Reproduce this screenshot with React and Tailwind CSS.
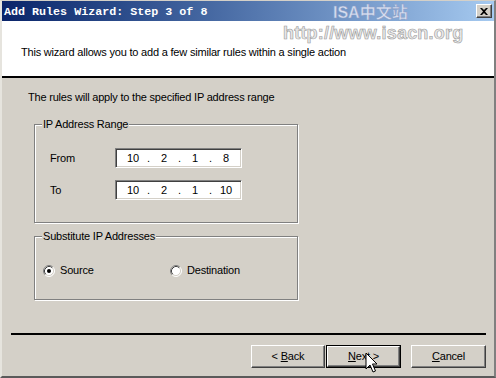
import React from "react";

function Radio({ checked }) {
  return (
    <svg width="12" height="12" viewBox="0 0 12 12" className="shrink-0">
      <circle cx="6" cy="6" r="5" fill="#ffffff" />
      <path d="M2.11 9.89 A5.5 5.5 0 0 1 9.89 2.11" fill="none" stroke="#808080" strokeWidth="1" />
      <path d="M9.89 2.11 A5.5 5.5 0 0 1 2.11 9.89" fill="none" stroke="#ffffff" strokeWidth="1" />
      <path d="M2.82 9.18 A4.5 4.5 0 0 1 9.18 2.82" fill="none" stroke="#404040" strokeWidth="1" />
      <path d="M9.18 2.82 A4.5 4.5 0 0 1 2.82 9.18" fill="none" stroke="#d4d0c8" strokeWidth="1" />
      {checked && <circle cx="6" cy="6" r="2" fill="#000000" />}
    </svg>
  );
}

function IpBox({ parts }) {
  return (
    <div className="w-[127px] h-[20px] bg-white border border-t-[#808080] border-l-[#808080] border-b-white border-r-white shadow-[inset_1px_1px_0_#404040,inset_-1px_-1px_0_#d4d0c8] flex items-center pl-[4px] text-[11px] leading-[13px] text-black">
      <span className="w-[26px] text-center">{parts[0]}</span>
      <span className="w-[5px] text-center">.</span>
      <span className="w-[26px] text-center">{parts[1]}</span>
      <span className="w-[5px] text-center">.</span>
      <span className="w-[26px] text-center">{parts[2]}</span>
      <span className="w-[5px] text-center">.</span>
      <span className="w-[26px] text-center">{parts[3]}</span>
    </div>
  );
}

function Button({ children, className = "" }) {
  return (
    <div
      className={
        "h-[23px] flex items-center justify-center bg-[#d4d0c8] border border-t-white border-l-white border-r-[#404040] border-b-[#404040] shadow-[inset_-1px_-1px_0_#808080] text-[11px] leading-[13px] text-black " +
        className
      }
    >
      {children}
    </div>
  );
}

export default function App() {
  return (
    <div className="relative w-[496px] h-[378px] overflow-hidden flex flex-col bg-[#d4d0c8] border-t border-t-[#d4d0c8] border-l-2 border-l-[#e6e4de] border-r-2 border-r-[#808080] border-b-2 border-b-[#5a5a5a] font-['Liberation_Sans',Arial,sans-serif] text-black tracking-[-0.2px]">
      {/* Title bar */}
      <div className="h-[20px] flex items-center justify-between pl-[2px] pr-[2px] bg-gradient-to-r from-[#0a246a] to-[#a6caf0]">
        <span className="font-['Liberation_Mono','Courier_New',monospace] font-bold text-[11.7px] leading-[14px] text-white pt-[1px] tracking-[0px]">
          Add Rules Wizard: Step 3 of 8
        </span>
        <div className="w-[16px] h-[14px] bg-[#d4d0c8] border border-t-white border-l-white border-r-[#404040] border-b-[#404040] shadow-[inset_-1px_-1px_0_#808080] flex items-center justify-center">
          <svg width="8" height="7" viewBox="0 0 8 7">
            <path d="M0 0 L2 0 L4 2 L6 0 L8 0 L5 3.5 L8 7 L6 7 L4 5 L2 7 L0 7 L3 3.5 Z" fill="#000" />
          </svg>
        </div>
      </div>

      {/* Header */}
      <div className="h-[57px] bg-white border-b-2 border-b-black pl-[19px] pt-[25px]">
        <p className="text-[11px] leading-[13px]">
          This wizard allows you to add a few similar rules within a single action
        </p>
      </div>

      {/* Body */}
      <div className="flex-1 flex flex-col pt-[13px]">
        <p className="ml-[26px] text-[11px] leading-[13px]">
          The rules will apply to the specified IP address range
        </p>

        <div className="relative ml-[32px] mt-[20px] w-[264px] h-[99px] border border-[#808080] shadow-[inset_1px_1px_0_#ffffff,1px_1px_0_#ffffff] pt-[23px] pl-[15px]">
          <span className="absolute top-[-7px] left-[7px] px-[1px] bg-[#d4d0c8] text-[11px] leading-[13px]">
            IP Address Range
          </span>
          <div className="flex items-center">
            <span className="w-[65px] text-[11px] leading-[13px]">From</span>
            <IpBox parts={["10", "2", "1", "8"]} />
          </div>
          <div className="flex items-center mt-[12px]">
            <span className="w-[65px] text-[11px] leading-[13px]">To</span>
            <IpBox parts={["10", "2", "1", "10"]} />
          </div>
        </div>

        <div className="relative ml-[32px] mt-[13px] w-[264px] h-[64px] border border-[#808080] shadow-[inset_1px_1px_0_#ffffff,1px_1px_0_#ffffff] pt-[27px] pl-[8px]">
          <span className="absolute top-[-7px] left-[7px] px-[1px] bg-[#d4d0c8] text-[11px] leading-[13px]">
            Substitute IP Addresses
          </span>
          <div className="flex items-center">
            <div className="w-[127px] flex items-center gap-[5px]">
              <Radio checked />
              <span className="text-[11px] leading-[13px]">Source</span>
            </div>
            <div className="flex items-center gap-[5px]">
              <Radio />
              <span className="text-[11px] leading-[13px]">Destination</span>
            </div>
          </div>
        </div>

        <div className="ml-[9px] mt-[33px] w-[475px] h-[2px] bg-black" />

        <div className="flex mt-[10px] ml-[249px]">
          <Button className="w-[74px]">
            &lt;&nbsp;<span className="underline">B</span>ack
          </Button>
          <div className="ml-[1px] w-[75px] h-[23px] border border-black">
            <div className="w-full h-full flex items-center justify-center bg-[#d4d0c8] border border-t-white border-l-white border-r-[#404040] border-b-[#404040] shadow-[inset_-1px_-1px_0_#808080] text-[11px] leading-[13px]">
              <span className="underline">N</span>ext&nbsp;&gt;
            </div>
          </div>
          <Button className="w-[75px] ml-[10px]">
            <span className="underline">C</span>ancel
          </Button>
        </div>
      </div>

      {/* Watermark */}
      <span className="absolute left-[331px] top-[3px] text-[16px] leading-[18px] font-bold tracking-[0px] text-[#d6def0] [-webkit-text-stroke:0.5px_#8a9cc4] font-['Liberation_Sans','Noto_Sans_CJK_SC',sans-serif]">
        ISA中文站
      </span>
      <span className="absolute left-[281px] top-[22px] text-[18px] leading-[21px] font-bold tracking-[0.2px] text-[#e8e8e8] [-webkit-text-stroke:0.6px_#9a9a9a]">
        http://www.isacn.org
      </span>

      {/* Cursor */}
      <svg className="absolute left-[363px] top-[351px]" width="13" height="22" viewBox="0 0 13 22">
        <path d="M1 1 L1 17 L5 13 L8 20 L10.5 19 L7.5 12 L12 12 Z" fill="#ffffff" stroke="#000000" strokeWidth="1" strokeLinejoin="miter" />
      </svg>
    </div>
  );
}
